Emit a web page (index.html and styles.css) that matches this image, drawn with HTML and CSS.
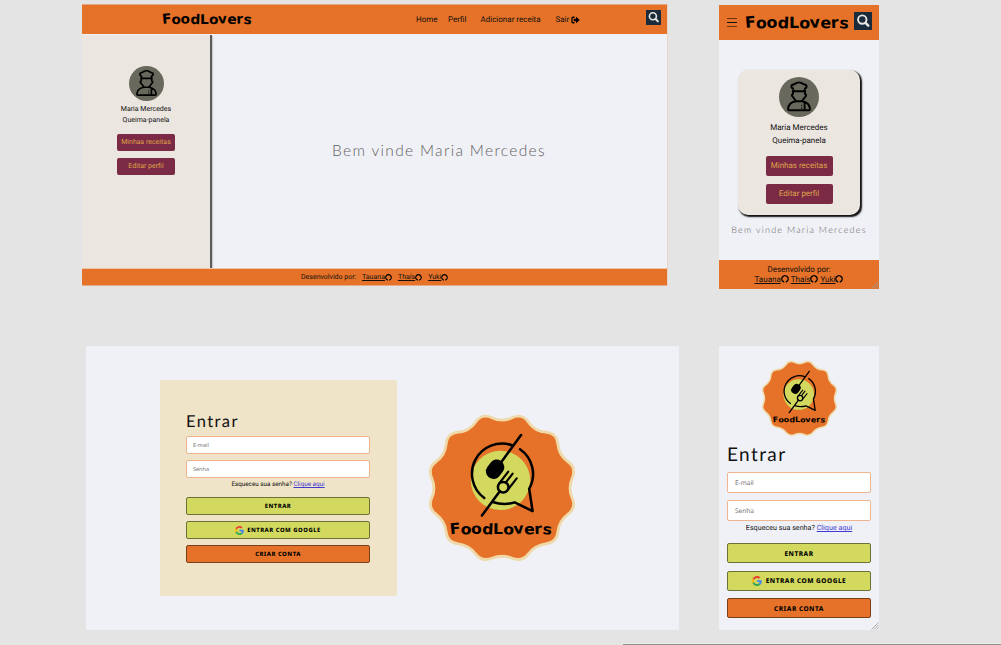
FILE: index.html
```html
<!DOCTYPE html>
<html lang="pt-BR">
<head>
<meta charset="utf-8">
<title>FoodLovers</title>
<link rel="stylesheet" href="styles.css">
</head>
<body>
<svg class="defs" width="0" height="0" aria-hidden="true">
  <symbol id="search" viewBox="0 0 15 15">
    <circle cx="6.900" cy="6.300" r="3.500" fill="none" stroke="#e9e7e4" stroke-width="1.600"/>
    <path d="M9.600 9L11.900 11.400" stroke="#e9e7e4" stroke-width="2" stroke-linecap="round"/>
  </symbol>
  <symbol id="chef" viewBox="0 0 40 40">
    <circle cx="20" cy="20" r="20" fill="#68685c"/>
    <g fill="none" stroke="#000" stroke-width="1.900" stroke-linejoin="round" stroke-linecap="round">
      <path d="M14.200 14.200V11.500C11.800 11 11.600 8 14.500 7.500C16.300 7.400 16.800 6 18 5.800C19.300 5.300 20.700 5.300 22 5.800C23.200 6 23.700 7.400 25.500 7.500C28.400 8 28.200 11 25.800 11.500V14.200Z"/>
      <path d="M14 14.200V17C12.500 17.500 12.500 18.800 13.800 19.800L17 24M26 14.200V17C27.500 17.500 27.500 18.800 26.200 19.800L23 24"/>
      <path d="M17 24.300C12.500 25 9.300 28 9 32Q9 33.300 10.200 33.300H29.800Q31 33.300 31 32C30.700 28 27.500 25 23 24.300ZM25.600 25.500V33"/>
      <path stroke-width="1.300" d="M22.600 28.300V28.400M22.600 31V31.100"/>
    </g>
  </symbol>
  <symbol id="github" viewBox="0 0 16 16">
    <path d="M5.600 13.800A6.400 6.400 0 1 1 10.400 13.800" fill="none" stroke="#000" stroke-width="2.500"/>
    <path d="M3 6L3.200 2.500L6 2.800ZM13 6L12.800 2.500L10 2.800ZM3 11.500L6.500 12.500V15L4.500 14.500ZM13 11.500L9.500 12.500V15L11.500 14.500Z"/>
  </symbol>
  <symbol id="google" viewBox="0 0 48 48">
    <path fill="#ea4335" d="M24 9.500c3.500 0 6.700 1.200 9.200 3.600l6.900-6.900C35.900 2.400 30.500 0 24 0 14.600 0 6.500 5.400 2.600 13.200l8 6.200C12.400 13.700 17.700 9.500 24 9.500z"/>
    <path fill="#4285f4" d="M47 24.500c0-1.600-.2-3.100-.4-4.500H24v9h12.900c-.6 3-2.200 5.500-4.700 7.200l7.700 6C44.400 38 47 31.800 47 24.500z"/>
    <path fill="#fbbc05" d="M10.500 28.600c-.5-1.500-.8-3-.8-4.600s.3-3.100.8-4.600l-8-6.200C.9 16.500 0 20.100 0 24s.9 7.500 2.600 10.800z"/>
    <path fill="#34a853" d="M24 48c6.500 0 11.900-2.100 15.900-5.800l-7.700-6c-2.200 1.500-4.900 2.300-8.200 2.300-6.300 0-11.600-4.200-13.500-9.900l-8 6.200C6.500 42.600 14.600 48 24 48z"/>
  </symbol>
  <symbol id="badge" viewBox="-74 -74 148 148">
    <path fill="#e57228" stroke="#f0d9a8" stroke-width="2.800" d="M-9.900-69.300Q0-64.600 9.900-69.300T26.100-64.900T43.200-55.100T55.100-43.200T64.900-26.100T69.300-9.900T69.300 9.900T64.900 26.100T55.100 43.200T43.200 55.100T26.100 64.900T9.900 69.300T-9.900 69.300T-26.100 64.900T-43.200 55.100T-55.100 43.200T-64.900 26.100T-69.300 9.900T-69.300-9.900T-64.900-26.100T-55.100-43.200T-43.200-55.100T-26.100-64.900T-9.900-69.300Z"/>
    <circle cx="-1.500" cy="-7.500" r="29.300" fill="#d2d95e"/>
    <g fill="none" stroke="#000" stroke-width="2.500" stroke-linecap="round" stroke-linejoin="round">
      <path d="M-17.500 9.800A29.700 29.700 0 0 1 9.800-42.200"/>
      <path d="M17.800-38.200A29.700 29.700 0 0 1 26.800.8L30.200 22.800L12.500 14.200Q2 17.500-9.200 13.800"/>
      <path d="M18.800-52.200L-3-22.500M-19.800 27.200L-2 3"/>
      <circle cx="1.200" cy="-.8" r="5.200"/>
      <path stroke-width="2.100" d="M-2.800-4.500L6.200-16.200M3.800-5.500L10.500-14.200M6.500.8L14.500-9.500"/>
    </g>
    <rect x="-14.300" y="-28.500" width="15" height="20" rx="7.200" transform="rotate(37 -6.800 -18.500)"/>
  </symbol>
  <symbol id="exit" viewBox="0 0 18 16">
    <path d="M7 2.500H4Q2 2.500 2 4.500V11.500Q2 13.500 4 13.500H7" fill="none" stroke="#000" stroke-width="2.600"/>
    <path d="M10 1.500L17.500 8L10 14.500V10.500H5.500V5.500H10Z"/>
  </symbol>
  <symbol id="grip" viewBox="0 0 8 8">
    <path d="M.5 7.500L7.500.5M3 7.500L7.500 3M5.500 7.500L7.500 5.500" stroke="#999" stroke-width=".8"/>
  </symbol>
</svg>

<div class="board">
  <section class="home-wide">
    <header class="bar">
      <svg class="wordmark" viewBox="0 0 90 16"><text class="script" x=".5" y="12.700" font-size="13.500" rotate="-5 3 -3 3 0 4 -4 2 -3 5" textLength="89" lengthAdjust="spacingAndGlyphs">FoodLovers</text></svg>
      <nav class="menu">
        <a>Home</a><a>Perfil</a><a>Adicionar receita</a><a>Sair <svg class="exit"><use href="#exit"/></svg></a>
      </nav>
      <span class="search"><svg><use href="#search"/></svg></span>
    </header>
    <div class="middle">
      <aside class="profile">
        <svg class="avatar"><use href="#chef"/></svg>
        <p>Maria Mercedes</p>
        <p>Queima-panela</p>
        <span class="pill">Minhas receitas</span>
        <span class="pill">Editar perfil</span>
      </aside>
      <main class="welcome">Bem vinde Maria Mercedes</main>
    </div>
    <footer class="credits">
      <span>Desenvolvido por:</span>
      <a><u>Tauana</u><svg><use href="#github"/></svg></a><a><u>Thaís</u><svg><use href="#github"/></svg></a><a><u>Yuki</u><svg><use href="#github"/></svg></a>
    </footer>
  </section>

  <section class="home-phone">
    <header class="bar">
      <span class="burger"><i></i><i></i><i></i></span>
      <svg class="wordmark" viewBox="0 0 90 16"><text class="script" x=".5" y="12.700" font-size="13.500" rotate="-5 3 -3 3 0 4 -4 2 -3 5" textLength="89" lengthAdjust="spacingAndGlyphs">FoodLovers</text></svg>
      <span class="search"><svg><use href="#search"/></svg></span>
    </header>
    <div class="profile">
      <svg class="avatar"><use href="#chef"/></svg>
      <p>Maria Mercedes</p>
      <p>Queima-panela</p>
      <span class="pill">Minhas receitas</span>
      <span class="pill">Editar perfil</span>
    </div>
    <div class="welcome">Bem vinde Maria Mercedes</div>
    <footer class="credits">
      <span>Desenvolvido por:</span>
      <div><a><u>Tauana</u><svg><use href="#github"/></svg></a> <a><u>Thaís</u><svg><use href="#github"/></svg></a> <a><u>Yuki</u><svg><use href="#github"/></svg></a></div>
    </footer>
    <svg class="grip"><use href="#grip"/></svg>
  </section>

  <section class="login-wide">
    <form class="login">
      <h1>Entrar</h1>
      <div class="field">E-mail</div>
      <div class="field">Senha</div>
      <p class="forgot">Esqueceu sua senha? <a>Clique aqui</a></p>
      <div class="btn">ENTRAR</div>
      <div class="btn"><svg><use href="#google"/></svg>ENTRAR COM GOOGLE</div>
      <div class="btn create">CRIAR CONTA</div>
    </form>
    <svg class="badge" viewBox="-74 -74 148 148"><use href="#badge" x="-74" y="-74" width="148" height="148"/><text class="script" x="-51" y="45.500" font-size="14.500" rotate="-5 3 -3 3 0 4 -4 2 -3 5" textLength="100" lengthAdjust="spacingAndGlyphs">FoodLovers</text></svg>
  </section>

  <section class="login-phone">
    <svg class="badge" viewBox="-74 -74 148 148"><use href="#badge" x="-74" y="-74" width="148" height="148"/><text class="script" x="-51" y="45.500" font-size="14.500" rotate="-5 3 -3 3 0 4 -4 2 -3 5" textLength="100" lengthAdjust="spacingAndGlyphs">FoodLovers</text></svg>
    <form class="login">
      <h1>Entrar</h1>
      <div class="field">E-mail</div>
      <div class="field">Senha</div>
      <p class="forgot">Esqueceu sua senha? <a>Clique aqui</a></p>
      <div class="btn">ENTRAR</div>
      <div class="btn"><svg><use href="#google"/></svg>ENTRAR COM GOOGLE</div>
      <div class="btn create">CRIAR CONTA</div>
    </form>
    <svg class="grip"><use href="#grip"/></svg>
  </section>
  <div class="edge"></div>
</div>
</body>
</html>
```
FILE: styles.css
```css
* { box-sizing: border-box; }
body { margin: 0; background: #e4e4e4; font-family: Roboto, "Liberation Sans", sans-serif; color: #111; text-rendering: geometricPrecision; }
p, h1 { margin: 0; }
svg { display: block; flex: none; }
.defs { position: absolute; }
.script { font-family: "DejaVu Sans", sans-serif; font-weight: 700; fill: #000; }

.board { position: relative; width: 1001px; height: 645px; overflow: hidden; display: grid; grid-template-columns: 597px 160px; column-gap: 40px; grid-template-rows: 341px 285px; padding: 4px 0 0 82px; align-items: start; }
.edge { position: absolute; right: 0; bottom: 0; width: 378px; height: 2px; border-bottom: 1px solid #8f8f8f; background: #eeeeee; }

.bar { background: #e57228; display: flex; align-items: center; }
.search { background: #1a2b3c; }
.search svg { width: 100%; height: 100%; }
.profile { display: flex; flex-direction: column; align-items: center; background: #ece6e1; }
.pill { background: #7b2a46; color: #dfa347; border-radius: 2px; text-align: center; }
.welcome { font-family: Lato, sans-serif; font-weight: 300; color: #606060; white-space: nowrap; }
.credits { background: #e57228; display: flex; align-items: center; }
.credits a { display: inline-flex; align-items: center; }
.credits u { text-underline-offset: 1px; }
.grip { position: absolute; right: 0; bottom: 0; width: 8px; height: 8px; }

.home-wide { width: 586px; height: 282px; border-right: 1px solid #e9d4c8; display: flex; flex-direction: column; }
.home-wide .bar { height: 30px; border-top: 1px solid #e3a582; padding-left: 80px; }
.home-wide .wordmark { width: 90px; height: 16px; margin-top: -2px; }
.menu { display: flex; font-size: 8px; margin-left: 164px; width: 230px; line-height: 10px; }
.menu a { display: flex; align-items: center; gap: 2px; white-space: nowrap; }
.menu a:nth-child(1) { width: 32px; }
.menu a:nth-child(2) { width: 32.500px; }
.menu a:nth-child(3) { width: 75px; }
.exit { width: 9px; height: 8px; }
.home-wide .search { width: 15px; height: 15px; margin-top: -4px; }
.middle { flex: 1; display: flex; background: #f0f1f6; padding-top: 1px; }
.home-wide .profile { width: 128px; font-size: 7px; line-height: 11px; padding-top: 31px; box-shadow: 2px 0 0 #5c5c60, 3px 1px 1px #ccc; }
.home-wide .avatar { width: 35px; height: 35px; margin-bottom: 3px; }
.home-wide .pill { width: 58px; height: 17px; line-height: 17px; margin-top: 7px; }
.home-wide p + .pill { margin-top: 8px; }
.home-wide .welcome { flex: 1; font-size: 15.500px; letter-spacing: 1.330px; line-height: 20px; padding: 106px 0 0 122px; }
.home-wide .credits { height: 18px; border-top: 1px solid #efc4a8; border-bottom: 1px solid #e5ab89; font-size: 7px; padding-left: 219px; }
.home-wide .credits span { width: 61px; }
.home-wide .credits a { margin-right: 6px; }
.home-wide .credits svg { width: 7px; height: 7px; }

.home-phone { position: relative; width: 160px; height: 284px; margin-top: 1px; background: #f0f1f6; display: flex; flex-direction: column; }
.home-phone .bar { height: 35px; padding-left: 8px; }
.burger { display: flex; flex-direction: column; gap: 3px; width: 10px; }
.burger i { height: 1px; background: #6c3512; }
.burger i:nth-child(2) { background: #111; }
.home-phone .wordmark { width: 104px; height: 19px; margin: -1px 5px 0 8px; }
.home-phone .search { width: 18px; height: 18px; margin-top: -3px; }
.home-phone .profile { width: 122px; height: 145px; margin: 30px 0 0 19px; border-radius: 10px; padding-top: 7px; box-shadow: 1.500px 1.500px 1.500px #111; font-size: 8px; line-height: 13px; }
.home-phone .avatar { width: 40px; height: 40px; margin-bottom: 4px; }
.home-phone .pill { width: 67px; height: 20px; line-height: 20px; margin-top: 8px; }
.home-phone p + .pill { margin-top: 9px; }
.home-phone .welcome { font-size: 9px; letter-spacing: 1.250px; text-align: center; line-height: 14px; margin-top: 8px; }
.home-phone .credits { margin-top: auto; height: 29px; flex-direction: column; justify-content: center; font-size: 8px; line-height: 9.500px; }
.home-phone .credits div { display: flex; gap: 2px; }
.home-phone .credits svg { width: 8px; height: 8px; }

.login-wide { width: 593px; height: 284px; margin: 1px 0 0 4px; background: #f0f1f6; display: flex; align-items: flex-start; }
.login-wide .login { width: 237px; height: 215.500px; margin: 34px 0 0 74px; background: #efe3c8; padding: 31px 27px 0 26px; border-radius: 1px; }
.login-wide .badge { width: 150px; height: 150px; margin: 67px 0 0 30px; }
.login h1 { font-family: Lato, sans-serif; font-weight: 400; color: #111; }
.field { background: #fff; border: 1px solid #efb48e; border-radius: 2px; color: #777; font-family: "Noto Sans", sans-serif; display: flex; align-items: center; padding-left: 6px; }
.forgot { text-align: center; white-space: nowrap; }
.forgot a { color: #3f3bd0; text-decoration: underline; }
.btn { background: #d2d95e; border: 1px solid #6d7138; border-radius: 2px; font-family: "Noto Sans", sans-serif; font-weight: 800; display: flex; align-items: center; justify-content: center; letter-spacing: .5px; color: #000; }
.btn.create { background: #e57228; border-color: #7a401c; }

.login-wide h1 { font-size: 16.500px; line-height: 20px; letter-spacing: 1.400px; margin-bottom: 5px; }
.login-wide .field { height: 18px; font-size: 5.500px; margin-bottom: 6px; }
.login-wide .forgot { font-size: 6.300px; line-height: 9px; margin: -4px 0 8px; }
.login-wide .btn { height: 18px; font-size: 5.900px; margin-bottom: 6px; }
.login-wide .btn svg { width: 9px; height: 9px; margin-right: 3px; }

.login-phone { position: relative; width: 160px; height: 284px; margin-top: 1px; background: #f0f1f6; padding: 14px 8px 0; }
.login-phone .badge { width: 77px; height: 77px; margin-left: 34px; }
.login-phone h1 { font-size: 19px; line-height: 24px; letter-spacing: 1.400px; margin: 6px 0 5px; }
.login-phone .field { height: 21px; font-size: 6.500px; margin-bottom: 7px; padding-left: 7px; }
.login-phone .forgot { font-size: 7.200px; line-height: 10px; margin: -5px 0 10px; }
.login-phone .btn { height: 20px; font-size: 6.500px; margin-bottom: 7.500px; }
.login-phone .btn svg { width: 10px; height: 10px; margin-right: 4px; }
```
